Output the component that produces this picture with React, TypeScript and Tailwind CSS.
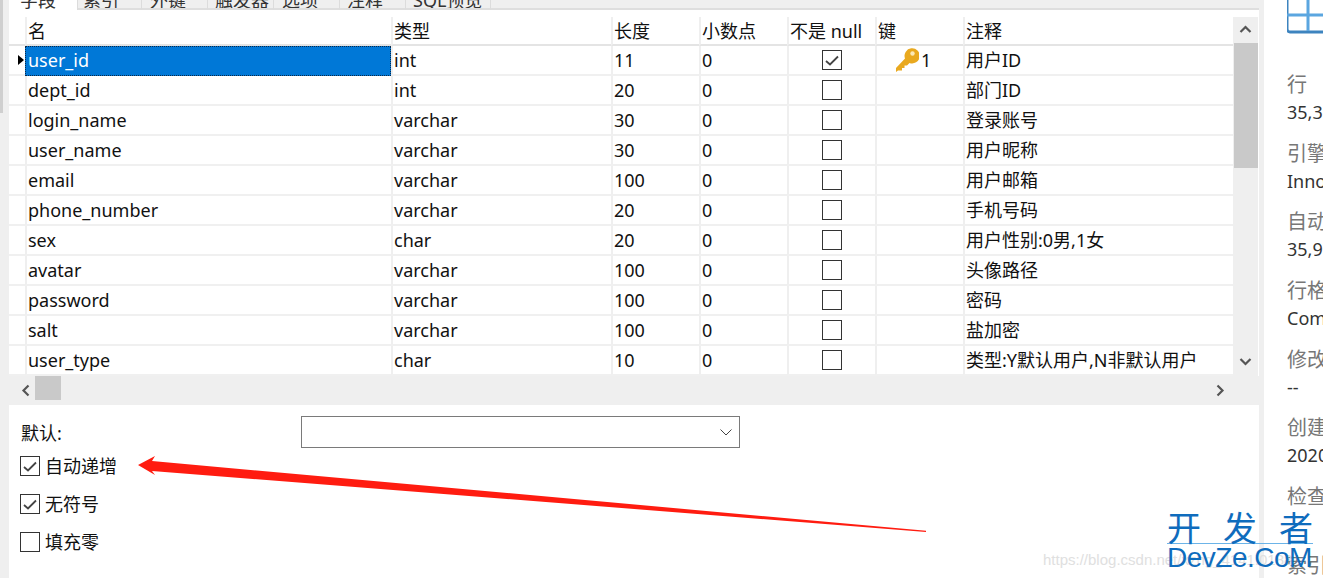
const FONT = "font-['Noto_Sans','Noto_Sans_CJK_SC',sans-serif]"

const rows = [
  ['user_id', 'int', '11', '0', true, '用户ID'],
  ['dept_id', 'int', '20', '0', false, '部门ID'],
  ['login_name', 'varchar', '30', '0', false, '登录账号'],
  ['user_name', 'varchar', '30', '0', false, '用户昵称'],
  ['email', 'varchar', '100', '0', false, '用户邮箱'],
  ['phone_number', 'varchar', '20', '0', false, '手机号码'],
  ['sex', 'char', '20', '0', false, '用户性别:0男,1女'],
  ['avatar', 'varchar', '100', '0', false, '头像路径'],
  ['password', 'varchar', '100', '0', false, '密码'],
  ['salt', 'varchar', '100', '0', false, '盐加密'],
  ['user_type', 'char', '10', '0', false, '类型:Y默认用户,N非默认用户'],
] as const

const tabs = [
  ['字段', 'w-[69px] bg-white pl-[11px]'],
  ['索引', 'w-[64px] pl-[5px] border-b-2 border-b-[#dedede]'],
  ['外键', 'w-[66px] pl-[8px] border-b-2 border-b-[#dedede]'],
  ['触发器', 'w-[66px] pl-[7px] border-b-2 border-b-[#dedede]'],
  ['选项', 'w-[66px] pl-[8px] border-b-2 border-b-[#dedede]'],
  ['注释', 'w-[66px] pl-[7px] border-b-2 border-b-[#dedede]'],
  ['SQL预览', 'w-[85px] pl-[7px] border-b-2 border-b-[#dedede]'],
]

const info = [
  ['行', '35,3'],
  ['引擎', 'Inno'],
  ['自动', '35,9'],
  ['行格', 'Com'],
  ['修改', '--'],
  ['创建', '2020'],
  ['检查', ''],
  ['索引', ''],
]

const gridCols = 'grid grid-cols-[16px_366px_220px_88px_88px_88px_88px_270px]'

function CheckBox({ checked, className = '' }: { checked: boolean; className?: string }) {
  return (
    <div className={`w-5 h-5 border border-[#333] bg-white flex items-center justify-center ${className}`}>
      {checked && (
        <svg width="14" height="11" viewBox="0 0 14 11" fill="none">
          <path d="M1 6l4 3.5L13 1.5" stroke="#444" strokeWidth="1.8" />
        </svg>
      )}
    </div>
  )
}

function KeyIcon() {
  return (
    <svg width="23" height="24" viewBox="0 0 23 24">
      <path d="M0 20l9-9.5A7.6 7.6 0 1 1 13.5 15L11 17.5H8.5V20H6v2.5H2L0 24z" fill="#e9a91f" />
      <circle cx="16.5" cy="5.5" r="2.2" fill="#fbe9b8" />
    </svg>
  )
}

function Chevron({ dir }: { dir: 'up' | 'down' | 'left' | 'right' }) {
  const d = {
    up: 'M1.5 8L6.5 3l5 5',
    down: 'M1.5 4l5 5 5-5',
    left: 'M8.5 1.5l-5 5 5 5',
    right: 'M4.5 1.5l5 5-5 5',
  }[dir]
  return (
    <svg width="13" height="13" viewBox="0 0 13 13" fill="none">
      <path d={d} stroke="#555" strokeWidth="2.2" />
    </svg>
  )
}

function Header() {
  const cell = 'h-[29px] border-b-2 border-[#e4e4e4] border-l-2 border-l-[#efefef] pl-[1px] leading-[28px]'
  return (
    <div className={gridCols}>
      <div className="h-[29px] border-b-2 border-[#e4e4e4]" />
      <div className={cell}>名</div>
      <div className={cell}>类型</div>
      <div className={cell}>长度</div>
      <div className={cell}>小数点</div>
      <div className={`${cell} whitespace-nowrap`}>不是 null</div>
      <div className={cell}>键</div>
      <div className={cell}>注释</div>
    </div>
  )
}

function Row({ row, index }: { row: (typeof rows)[number]; index: number }) {
  const [name, type, len, dec, notNull, comment] = row
  const first = index === 0
  const cell = 'h-[30px] border-b-2 border-[#f0f0f0] border-l-2 border-l-[#efefef] pl-[1px] leading-[28px] whitespace-nowrap overflow-hidden'
  return (
    <div className={gridCols}>
      <div className="h-[30px] border-b-2 border-[#f0f0f0] flex items-center justify-end pr-[1px]">
        {first && <div className="w-0 h-0 border-y-[5px] border-y-transparent border-l-[6px] border-l-black" />}
      </div>
      {first ? (
        <div className="h-[30px] bg-[#0078d7] text-white border border-dotted border-[#0b2a4a] pl-[2px] leading-[27px]">{name}</div>
      ) : (
        <div className={cell}>{name}</div>
      )}
      <div className={cell}>{type}</div>
      <div className={cell}>{len}</div>
      <div className={cell}>{dec}</div>
      <div className={`${cell} flex justify-center items-center pr-[1px]`}>
        <CheckBox checked={notNull} />
      </div>
      <div className={`${cell} flex items-center pl-[19px] gap-[2px]`}>
        {first && <KeyIcon />}
        {first && <span>1</span>}
      </div>
      <div className={cell}>{comment}</div>
    </div>
  )
}

function OptionRow({ label, checked, className = '' }: { label: string; checked: boolean; className?: string }) {
  return (
    <div className={`flex items-center gap-[5px] ${className}`}>
      <CheckBox checked={checked} />
      <span>{label}</span>
    </div>
  )
}

export default function App() {
  return (
    <div className={`relative w-[1323px] h-[578px] overflow-hidden flex bg-white text-[18px] text-[#111] ${FONT}`}>
      {/* 左侧窄条 */}
      <div className="w-[9px] bg-[#efefef] flex">
        <div className="w-[3px] h-[113px] bg-[#cfcfcf]" />
      </div>

      {/* 主面板 */}
      <div className="w-[1250px] flex flex-col">
        <div className="h-[10px] bg-[#efefef] flex overflow-hidden shrink-0">
          {tabs.map(([label, cls]) => (
            <div key={label} className={`${cls} h-[22px] -mt-[12px] pt-[2px] border-r border-r-[#dcdcdc] leading-[20px] overflow-hidden whitespace-nowrap shrink-0 text-[#333]`}>
              {label}
            </div>
          ))}
          <div className="flex-1 h-[10px] border-b-2 border-b-[#dedede]" />
        </div>

        <div className="h-[366px] flex pt-[7px] shrink-0">
          <div className="w-[1224px] overflow-hidden">
            <Header />
            {rows.map((row, i) => (
              <Row key={row[0]} row={row} index={i} />
            ))}
          </div>
          <div className="w-[25px] bg-[#efefef] flex flex-col items-center">
            <div className="h-[26px] flex items-center justify-center"><Chevron dir="up" /></div>
            <div className="w-[24px] h-[125px] bg-[#c9c9c9]" />
            <div className="flex-1 flex items-end justify-center pb-[8px]"><Chevron dir="down" /></div>
          </div>
        </div>

        <div className="h-[29px] bg-[#efefef] flex items-center shrink-0">
          <div className="w-[26px] flex justify-end pr-[2px]"><Chevron dir="left" /></div>
          <div className="w-[26px] h-[24px] bg-[#c9c9c9] -mt-[5px]" />
          <div className="flex-1" />
          <div className="pr-[33px]"><Chevron dir="right" /></div>
        </div>

        <div className="flex-1 flex flex-col pl-[11px] pt-[11px]">
          <div className="flex items-center h-[32px]">
            <span className="w-[281px] pl-[1px] pt-[2px]">默认:</span>
            <div className="w-[439px] h-[32px] border border-[#7a7a7a] flex items-center justify-end pr-[7px]">
              <svg width="12" height="7" viewBox="0 0 12 7" fill="none">
                <path d="M.5.5L6 6l5.5-5.5" stroke="#444" strokeWidth="1" />
              </svg>
            </div>
          </div>
          <OptionRow label="自动递增" checked className="mt-[2px] h-[32px]" />
          <OptionRow label="无符号" checked className="mt-[6px] h-[32px]" />
          <OptionRow label="填充零" checked={false} className="mt-[6px] h-[32px]" />
        </div>
      </div>

      <div className="w-[5px] bg-[#efefef]" />

      {/* 右侧信息面板 */}
      <div className="flex-1 overflow-hidden pl-[23px] whitespace-nowrap">
        <svg width="60" height="34" viewBox="0 0 60 34" className="block">
          <path d="M0 -4V29a3 3 0 0 0 3 3H60" fill="none" stroke="#3d84bf" strokeWidth="3" />
          <path d="M21 0V31M0 15H60" fill="none" stroke="#5ba6e0" strokeWidth="3" />
        </svg>
        <div className="mt-[36px] flex flex-col">
          {info.map(([k, v]) => (
            <div key={k} className="h-[68.7px]">
              <div className="text-[20px] leading-[30px] text-[#777]">{k}</div>
              <div className="leading-[24px] text-[#333]">{v}</div>
            </div>
          ))}
        </div>
      </div>

      {/* 红色箭头 */}
      <svg className="absolute left-0 top-0 pointer-events-none" width="1323" height="578" viewBox="0 0 1323 578">
        <path d="M138 465L155 456L152 461L926 530.8V532L152 471L155 475Z" fill="#ff1c10" />
      </svg>

      {/* 水印 */}
      <div className="absolute left-[1043px] top-[550px] text-[15px] leading-[20px] whitespace-nowrap text-[#e0e0e0] font-['Liberation_Sans',sans-serif]">
        https://blog.csdn.net/xzhg_4141.0188
      </div>
      <div className="absolute left-[1167px] top-[511px] w-[146px] text-[#0f6cbd]">
        <div className="flex justify-between h-[32px] text-[34px] leading-[32px] font-['Noto_Sans_CJK_SC',sans-serif]">
          <span>开</span>
          <span>发</span>
          <span>者</span>
        </div>
        <div className="border-t border-[#6cb4e8] text-[28px] leading-[27px] tracking-[-0.5px] whitespace-nowrap font-['Liberation_Sans',sans-serif]">DevZe.CoM</div>
      </div>
    </div>
  )
}
